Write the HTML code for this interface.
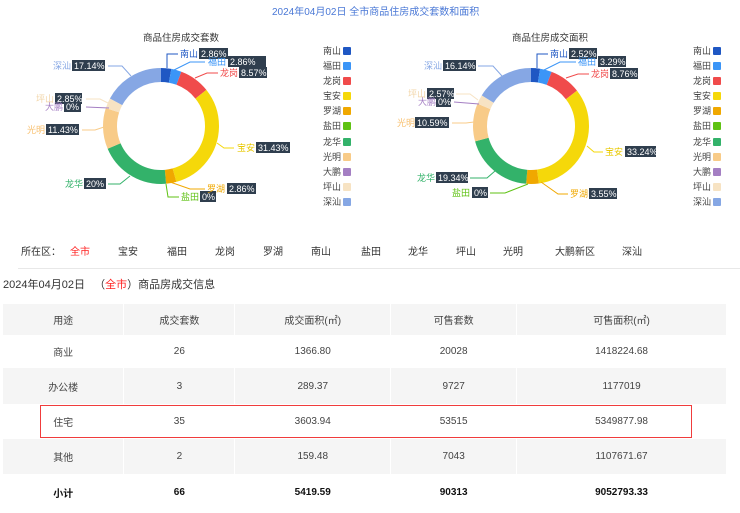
<!DOCTYPE html>
<html><head><meta charset="utf-8"><style>
body{margin:0;width:740px;height:513px;background:#fff;font-family:"Liberation Sans","Noto Sans CJK SC",sans-serif;position:relative;overflow:hidden;color:#333}
.a{position:absolute;white-space:nowrap}
svg text{font-family:"Liberation Sans","Noto Sans CJK SC",sans-serif}
table{position:absolute;left:3px;top:304px;width:724px;border-collapse:collapse;font-size:10px;color:#444;text-align:center}
td{padding:0;border-right:1px solid #fff}
tr.g td{background:#f5f5f5}
tr.b td{font-weight:bold;color:#111}
</style></head><body>
<div class="a" style="left:272px;top:3px;font-size:10px;color:#4a78d6">2024年04月02日 全市商品住房成交套数和面积</div>
<div class="a" style="left:143px;top:30px;font-size:9.5px;color:#333">商品住房成交套数</div>
<div class="a" style="left:512px;top:30px;font-size:9.5px;color:#333">商品住房成交面积</div>
<svg class="a" style="left:0;top:0" width="740" height="230">
<g transform="rotate(-90 161 126)" fill="none" stroke-width="14">
<circle cx="161" cy="126" r="51" pathLength="100" stroke="#1f57c3" stroke-dasharray="2.86 97.14" stroke-dashoffset="0"/>
<circle cx="161" cy="126" r="51" pathLength="100" stroke="#3b95f7" stroke-dasharray="2.86 97.14" stroke-dashoffset="-2.86"/>
<circle cx="161" cy="126" r="51" pathLength="100" stroke="#f04b4b" stroke-dasharray="8.57 91.43" stroke-dashoffset="-5.72"/>
<circle cx="161" cy="126" r="51" pathLength="100" stroke="#f5d80a" stroke-dasharray="31.43 68.57" stroke-dashoffset="-14.29"/>
<circle cx="161" cy="126" r="51" pathLength="100" stroke="#f0a800" stroke-dasharray="2.86 97.14" stroke-dashoffset="-45.72"/>
<circle cx="161" cy="126" r="51" pathLength="100" stroke="#33b26a" stroke-dasharray="20 80" stroke-dashoffset="-48.58"/>
<circle cx="161" cy="126" r="51" pathLength="100" stroke="#f8cb88" stroke-dasharray="11.43 88.57" stroke-dashoffset="-68.58"/>
<circle cx="161" cy="126" r="51" pathLength="100" stroke="#f7e3c3" stroke-dasharray="2.85 97.15" stroke-dashoffset="-80.01"/>
<circle cx="161" cy="126" r="51" pathLength="100" stroke="#86a7e4" stroke-dasharray="17.14 82.86" stroke-dashoffset="-82.86"/>
</g>
<g transform="rotate(-90 531 126)" fill="none" stroke-width="14">
<circle cx="531" cy="126" r="51" pathLength="100" stroke="#1f57c3" stroke-dasharray="2.52 97.48" stroke-dashoffset="0"/>
<circle cx="531" cy="126" r="51" pathLength="100" stroke="#3b95f7" stroke-dasharray="3.29 96.71" stroke-dashoffset="-2.52"/>
<circle cx="531" cy="126" r="51" pathLength="100" stroke="#f04b4b" stroke-dasharray="8.76 91.24" stroke-dashoffset="-5.81"/>
<circle cx="531" cy="126" r="51" pathLength="100" stroke="#f5d80a" stroke-dasharray="33.24 66.76" stroke-dashoffset="-14.57"/>
<circle cx="531" cy="126" r="51" pathLength="100" stroke="#f0a800" stroke-dasharray="3.55 96.45" stroke-dashoffset="-47.81"/>
<circle cx="531" cy="126" r="51" pathLength="100" stroke="#33b26a" stroke-dasharray="19.34 80.66" stroke-dashoffset="-51.36"/>
<circle cx="531" cy="126" r="51" pathLength="100" stroke="#f8cb88" stroke-dasharray="10.59 89.41" stroke-dashoffset="-70.7"/>
<circle cx="531" cy="126" r="51" pathLength="100" stroke="#f7e3c3" stroke-dasharray="2.57 97.43" stroke-dashoffset="-81.29"/>
<circle cx="531" cy="126" r="51" pathLength="100" stroke="#86a7e4" stroke-dasharray="16.14 83.86" stroke-dashoffset="-83.86"/>
</g>
<g fill="none" stroke-width="1">
<polyline points="167,68 167,54 178,54" stroke="#1f57c3"/>
<polyline points="174,70 190,62 205,62" stroke="#3b95f7"/>
<polyline points="195,78 207,73 218,73" stroke="#f04b4b"/>
<polyline points="217,143 224,148 234,148" stroke="#f5d80a"/>
<polyline points="170,182 190,189 205,189" stroke="#f0a800"/>
<polyline points="166,184 168,197 179,197" stroke="#5fc213"/>
<polyline points="130,176 120,184 108,184" stroke="#33b26a"/>
<polyline points="104,127 95,130 82,130" stroke="#f8cb88"/>
<polyline points="108,103 100,99 86,99" stroke="#f7e3c3"/>
<polyline points="109,108 86,107" stroke="#a47fc3"/>
<polyline points="131,76 122,66 108,66" stroke="#86a7e4"/>
<polyline points="537,68 537,54 548,54" stroke="#1f57c3"/>
<polyline points="544,70 560,62 576,62" stroke="#3b95f7"/>
<polyline points="566,78 578,74 589,74" stroke="#f04b4b"/>
<polyline points="587,146 594,152 603,152" stroke="#f5d80a"/>
<polyline points="541,182 558,194 568,194" stroke="#f0a800"/>
<polyline points="528,184 505,193 490,193" stroke="#5fc213"/>
<polyline points="495,171 487,178 470,178" stroke="#33b26a"/>
<polyline points="474,122 466,123 452,123" stroke="#f8cb88"/>
<polyline points="478,100 470,94 456,94" stroke="#f7e3c3"/>
<polyline points="479,104 454,102" stroke="#a47fc3"/>
<polyline points="502,76 493,66 478,66" stroke="#86a7e4"/>
</g>
<g font-size="9">
<g fill="#2f3e4e">
<rect x="199" y="48" width="29" height="11"/><rect x="228" y="56" width="38" height="11"/><rect x="239" y="67" width="28" height="11"/><rect x="256" y="142" width="34" height="11"/><rect x="227" y="183" width="29" height="11"/><rect x="200" y="191" width="16" height="11"/><rect x="84" y="178" width="22" height="11"/><rect x="46" y="124" width="33" height="11"/><rect x="55" y="93" width="27" height="11"/><rect x="64" y="101" width="17" height="11"/><rect x="72" y="60" width="33" height="11"/>
<rect x="569" y="48" width="28" height="11"/><rect x="598" y="56" width="28" height="11"/><rect x="610" y="68" width="28" height="11"/><rect x="625" y="146" width="31" height="11"/><rect x="589" y="188" width="28" height="11"/><rect x="472" y="187" width="16" height="11"/><rect x="436" y="172" width="32" height="11"/><rect x="415" y="117" width="34" height="11"/><rect x="427" y="88" width="27" height="11"/><rect x="436" y="96" width="15" height="11"/><rect x="443" y="60" width="33" height="11"/>
</g>
<g fill="#fff">
<text x="201" y="57">2.86%</text><text x="230" y="65">2.86%</text><text x="241" y="76">8.57%</text><text x="258" y="151">31.43%</text><text x="229" y="192">2.86%</text><text x="202" y="200">0%</text><text x="86" y="187">20%</text><text x="48" y="133">11.43%</text><text x="57" y="102">2.85%</text><text x="66" y="110">0%</text><text x="74" y="69">17.14%</text>
<text x="571" y="57">2.52%</text><text x="600" y="65">3.29%</text><text x="612" y="77">8.76%</text><text x="627" y="155">33.24%</text><text x="591" y="197">3.55%</text><text x="474" y="196">0%</text><text x="438" y="181">19.34%</text><text x="417" y="126">10.59%</text><text x="429" y="97">2.57%</text><text x="438" y="105">0%</text><text x="445" y="69">16.14%</text>
</g>
<text x="180" y="57" fill="#1f57c3">南山</text><text x="208" y="65" fill="#3b95f7">福田</text><text x="220" y="76" fill="#f04b4b">龙岗</text><text x="237" y="151" fill="#e8c800">宝安</text><text x="207" y="192" fill="#f0a800">罗湖</text><text x="181" y="200" fill="#5fc213">盐田</text><text x="65" y="187" fill="#33b26a">龙华</text><text x="27" y="133" fill="#f8c070">光明</text><text x="36" y="102" fill="#f2d5a8">坪山</text><text x="45" y="110" fill="#a47fc3">大鹏</text><text x="53" y="69" fill="#86a7e4">深汕</text>
<text x="550" y="57" fill="#1f57c3">南山</text><text x="578" y="65" fill="#3b95f7">福田</text><text x="591" y="77" fill="#f04b4b">龙岗</text><text x="605" y="155" fill="#e8c800">宝安</text><text x="570" y="197" fill="#f0a800">罗湖</text><text x="452" y="196" fill="#5fc213">盐田</text><text x="417" y="181" fill="#33b26a">龙华</text><text x="397" y="126" fill="#f8c070">光明</text><text x="408" y="97" fill="#f2d5a8">坪山</text><text x="418" y="105" fill="#a47fc3">大鹏</text><text x="424" y="69" fill="#86a7e4">深汕</text>
</g>
<g font-size="9" fill="#444">
<text x="323" y="54">南山</text><text x="323" y="69">福田</text><text x="323" y="84">龙岗</text><text x="323" y="99">宝安</text><text x="323" y="114">罗湖</text><text x="323" y="129">盐田</text><text x="323" y="145">龙华</text><text x="323" y="160">光明</text><text x="323" y="175">大鹏</text><text x="323" y="190">坪山</text><text x="323" y="205">深汕</text>
<text x="693" y="54">南山</text><text x="693" y="69">福田</text><text x="693" y="84">龙岗</text><text x="693" y="99">宝安</text><text x="693" y="114">罗湖</text><text x="693" y="129">盐田</text><text x="693" y="145">龙华</text><text x="693" y="160">光明</text><text x="693" y="175">大鹏</text><text x="693" y="190">坪山</text><text x="693" y="205">深汕</text>
</g>
<g>
<rect x="343" y="47" width="8" height="8" rx="1" fill="#1f57c3"/><rect x="343" y="62" width="8" height="8" rx="1" fill="#3b95f7"/><rect x="343" y="77" width="8" height="8" rx="1" fill="#f04b4b"/><rect x="343" y="92" width="8" height="8" rx="1" fill="#f5d80a"/><rect x="343" y="107" width="8" height="8" rx="1" fill="#f0a800"/><rect x="343" y="122" width="8" height="8" rx="1" fill="#5fc213"/><rect x="343" y="138" width="8" height="8" rx="1" fill="#33b26a"/><rect x="343" y="153" width="8" height="8" rx="1" fill="#f8cb88"/><rect x="343" y="168" width="8" height="8" rx="1" fill="#a47fc3"/><rect x="343" y="183" width="8" height="8" rx="1" fill="#f7e3c3"/><rect x="343" y="198" width="8" height="8" rx="1" fill="#86a7e4"/>
<rect x="713" y="47" width="8" height="8" rx="1" fill="#1f57c3"/><rect x="713" y="62" width="8" height="8" rx="1" fill="#3b95f7"/><rect x="713" y="77" width="8" height="8" rx="1" fill="#f04b4b"/><rect x="713" y="92" width="8" height="8" rx="1" fill="#f5d80a"/><rect x="713" y="107" width="8" height="8" rx="1" fill="#f0a800"/><rect x="713" y="122" width="8" height="8" rx="1" fill="#5fc213"/><rect x="713" y="138" width="8" height="8" rx="1" fill="#33b26a"/><rect x="713" y="153" width="8" height="8" rx="1" fill="#f8cb88"/><rect x="713" y="168" width="8" height="8" rx="1" fill="#a47fc3"/><rect x="713" y="183" width="8" height="8" rx="1" fill="#f7e3c3"/><rect x="713" y="198" width="8" height="8" rx="1" fill="#86a7e4"/>
</g>
</svg>
<div class="a" style="top:243px;left:0;font-size:10px;color:#333">
<span class="a" style="left:21px">所在区：</span><span class="a" style="left:70px;color:#f22">全市</span><span class="a" style="left:118px">宝安</span><span class="a" style="left:167px">福田</span><span class="a" style="left:215px">龙岗</span><span class="a" style="left:263px">罗湖</span><span class="a" style="left:311px">南山</span><span class="a" style="left:361px">盐田</span><span class="a" style="left:408px">龙华</span><span class="a" style="left:456px">坪山</span><span class="a" style="left:503px">光明</span><span class="a" style="left:555px">大鹏新区</span><span class="a" style="left:622px">深汕</span>
</div>
<div class="a" style="left:18px;top:268px;width:722px;height:1px;background:#e8e8e8"></div>
<div class="a" style="left:3px;top:276px;font-size:11px;color:#333">2024年04月02日 &nbsp;&nbsp;（<span style="color:#f22">全市</span>）商品房成交信息</div>
<table>
<colgroup><col style="width:121px"><col style="width:111px"><col style="width:156px"><col style="width:126px"><col style="width:210px"></colgroup>
<tr class="g" style="height:31px"><td>用途</td><td>成交套数</td><td>成交面积(㎡)</td><td>可售套数</td><td>可售面积(㎡)</td></tr>
<tr style="height:33px"><td>商业</td><td>26</td><td>1366.80</td><td>20028</td><td>1418224.68</td></tr>
<tr class="g" style="height:36px"><td>办公楼</td><td>3</td><td>289.37</td><td>9727</td><td>1177019</td></tr>
<tr style="height:35px"><td>住宅</td><td>35</td><td>3603.94</td><td>53515</td><td>5349877.98</td></tr>
<tr class="g" style="height:35px"><td>其他</td><td>2</td><td>159.48</td><td>7043</td><td>1107671.67</td></tr>
<tr class="b" style="height:36px"><td>小计</td><td>66</td><td>5419.59</td><td>90313</td><td>9052793.33</td></tr>
</table>
<div class="a" style="left:40px;top:405px;width:650px;height:31px;border:1.5px solid #f03c3c"></div>
</body></html>
